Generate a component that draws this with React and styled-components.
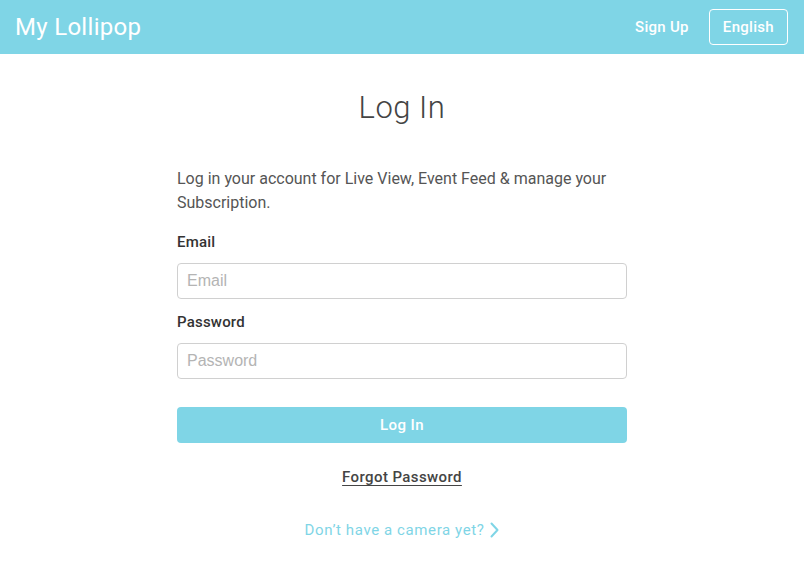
import React from 'react'
import styled, { createGlobalStyle } from 'styled-components'

const brand = '#7fd5e6'

const GlobalStyle = createGlobalStyle`
  body {
    margin: 0;
    background: #fff;
    font-family: Roboto, "Noto Sans", sans-serif;
  }
`

const Header = styled.header`
  height: 54px;
  background: ${brand};
  display: flex;
  align-items: center;
  justify-content: space-between;
  padding: 0 16px 0 15px;
`

const Brand = styled.div`
  color: #fff;
  font-size: 24px;
  font-weight: 400;
  letter-spacing: 0.3px;
`

const Nav = styled.nav`
  display: flex;
  align-items: center;
  gap: 20px;
`

const NavLink = styled.a`
  color: #fff;
  font-size: 15px;
  font-weight: 500;
  text-decoration: none;
  letter-spacing: 0.3px;
`

const LangButton = styled.button`
  height: 36px;
  padding: 0 13px;
  background: transparent;
  border: 1px solid #fff;
  border-radius: 4px;
  color: #fff;
  font-family: inherit;
  font-size: 15px;
  font-weight: 500;
  letter-spacing: 0.3px;
`

const Main = styled.main`
  width: 450px;
  margin: 0 auto;
  padding-top: 34px;
  display: flex;
  flex-direction: column;
`

const Title = styled.h1`
  margin: 0 0 39px;
  text-align: center;
  font-size: 31px;
  font-weight: 300;
  color: #444;
  line-height: 40px;
  letter-spacing: 0.5px;
`

const Intro = styled.p`
  margin: 0 0 17px;
  font-size: 16px;
  line-height: 24px;
  color: #555;
`

const Label = styled.label`
  display: block;
  font-size: 15px;
  font-weight: 500;
  color: #333;
  line-height: 20px;
  margin-bottom: 11px;
  letter-spacing: 0.2px;
`

const Field = styled.div`
  margin-bottom: ${p => p.$gap}px;
`

const Input = styled.input`
  box-sizing: border-box;
  width: 100%;
  height: 36px;
  border: 1px solid #d0d0d0;
  border-radius: 4px;
  padding: 0 9px;
  font-family: "Liberation Sans", Arial, sans-serif;
  font-size: 16px;
  color: #333;
  outline: none;
  &::placeholder {
    color: #b4b4b4;
  }
`

const SubmitButton = styled.button`
  height: 36px;
  width: 100%;
  border: none;
  border-radius: 4px;
  background: ${brand};
  color: #fff;
  font-family: inherit;
  font-size: 15px;
  font-weight: 500;
  letter-spacing: 0.4px;
  margin-bottom: 22px;
`

const Forgot = styled.a`
  align-self: center;
  color: #444;
  font-size: 15px;
  font-weight: 500;
  text-decoration: underline;
  text-underline-offset: 3px;
  letter-spacing: 0.4px;
  line-height: 24px;
  margin-bottom: 29px;
`

const CameraLink = styled.a`
  align-self: center;
  display: flex;
  align-items: center;
  gap: 6px;
  color: ${brand};
  font-size: 15px;
  letter-spacing: 0.6px;
  text-decoration: none;
  line-height: 24px;
`

const Chevron = () => (
  <svg width="9" height="16" viewBox="0 0 9 16" fill="none">
    <path d="M1.5 1.5 L7.5 8 L1.5 14.5" stroke={brand} strokeWidth="2" strokeLinecap="round" strokeLinejoin="round" />
  </svg>
)

export default function App() {
  return (
    <>
      <GlobalStyle />
      <Header>
        <Brand>My Lollipop</Brand>
        <Nav>
          <NavLink href="#">Sign Up</NavLink>
          <LangButton>English</LangButton>
        </Nav>
      </Header>
      <Main>
        <Title>Log In</Title>
        <Intro>Log in your account for Live View, Event Feed &amp; manage your Subscription.</Intro>
        <Field $gap={13}>
          <Label>Email</Label>
          <Input type="email" placeholder="Email" />
        </Field>
        <Field $gap={28}>
          <Label>Password</Label>
          <Input type="password" placeholder="Password" />
        </Field>
        <SubmitButton>Log In</SubmitButton>
        <Forgot href="#">Forgot Password</Forgot>
        <CameraLink href="#">
          Don’t have a camera yet?
          <Chevron />
        </CameraLink>
      </Main>
    </>
  )
}
